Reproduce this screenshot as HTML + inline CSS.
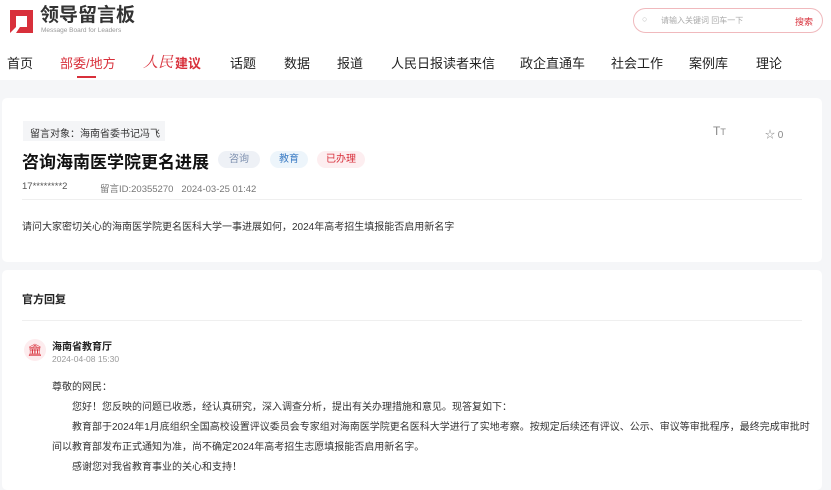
<!DOCTYPE html>
<html><head><meta charset="utf-8"><style>
*{margin:0;padding:0;box-sizing:border-box}
body{width:831px;height:482px;overflow:hidden;background:#f5f6f8;font-family:"Liberation Sans","Noto Sans CJK SC",sans-serif;color:#222;position:relative}
.hd{position:absolute;left:0;top:0;width:831px;height:80px;background:#fff}
.abs{position:absolute;white-space:nowrap}
.nav span{position:absolute;top:53px;font-size:13px;color:#222}
.card{position:absolute;background:#fff;border-radius:5px}
.tag{position:absolute;top:151px;height:17px;border-radius:9px;font-size:10px;line-height:17px;text-align:center}
.p{position:absolute;font-size:10px;color:#333;white-space:nowrap}
</style></head><body>
<div class="hd"></div>
<svg class="abs" style="left:8px;top:8px" width="27" height="27" viewBox="0 0 27 27"><path d="M2 2H25V25H8L12 19H19V8H8V19L2 25Z" fill="#d8303b"/></svg>
<div class="abs" style="left:40px;top:5px;font-size:19px;font-weight:bold;color:#333;line-height:22px">领导留言板</div>
<div class="abs" style="left:41px;top:27px;font-size:6.5px;color:#999">Message Board for Leaders</div>
<div class="abs" style="left:633px;top:8px;width:190px;height:25px;border:1px solid #f0b9bd;border-radius:13px;background:#fff"></div>
<div class="abs" style="left:642px;top:14px;font-size:9px;color:#bbb">○</div>
<div class="abs" style="left:661px;top:15px;font-size:8px;color:#aaa">请输入关键词 回车一下</div>
<div class="abs" style="left:795px;top:15px;font-size:9px;color:#d8303b">搜索</div>
<div class="nav">
<span style="left:7px">首页</span>
<span style="left:60px;color:#d8303b">部委/地方</span>
<span style="left:143px;color:#d8303b;font-style:italic;font-family:'Liberation Serif','Noto Serif CJK SC',serif;font-size:15px;top:51px">人民</span>
<span style="left:175px;color:#d8303b;font-weight:bold">建议</span>
<span style="left:230px">话题</span>
<span style="left:284px">数据</span>
<span style="left:337px">报道</span>
<span style="left:391px">人民日报读者来信</span>
<span style="left:520px">政企直通车</span>
<span style="left:611px">社会工作</span>
<span style="left:689px">案例库</span>
<span style="left:756px">理论</span>
</div>
<div class="abs" style="left:77px;top:76px;width:19px;height:2px;background:#d8303b"></div>

<div class="card" style="left:2px;top:98px;width:820px;height:164px"></div>
<div class="abs" style="left:23px;top:121px;width:142px;height:20px;background:#f4f5f7"></div>
<div class="p" style="left:30px;top:125px;color:#333">留言对象：海南省委书记冯飞</div>
<div class="abs" style="left:22px;top:148px;font-size:17px;font-weight:bold;color:#111">咨询海南医学院更名进展</div>
<div class="tag" style="left:218px;width:42px;background:#eef1f6;color:#7d8fae">咨询</div>
<div class="tag" style="left:270px;width:38px;background:#edf5fb;color:#3c7cc4">教育</div>
<div class="tag" style="left:317px;width:48px;background:#fdeef0;color:#d8303b">已办理</div>
<div class="p" style="left:22px;top:181px;color:#555;font-size:9.5px">17********2</div>
<div class="p" style="left:100px;top:181px;color:#777;font-size:9.5px">留言ID:20355270&nbsp;&nbsp;&nbsp;2024-03-25 01:42</div>
<div class="abs" style="left:713px;top:124px;font-size:12px;color:#888">T<span style="font-size:9px">T</span></div>
<div class="abs" style="left:765px;top:126px;font-size:10px;color:#888">☆ 0</div>
<div class="abs" style="left:22px;top:199px;width:780px;height:1px;background:#efefef"></div>
<div class="p" style="left:22px;top:218px">请问大家密切关心的海南医学院更名医科大学一事进展如何，2024年高考招生填报能否启用新名字</div>

<div class="card" style="left:2px;top:270px;width:820px;height:220px"></div>
<div class="abs" style="left:22px;top:291px;font-size:11px;font-weight:bold;color:#222">官方回复</div>
<div class="abs" style="left:22px;top:320px;width:780px;height:1px;background:#efefef"></div>
<div class="abs" style="left:24px;top:339px;width:22px;height:22px;border-radius:50%;background:#fdecee;color:#d8303b;font-size:12px;text-align:center;line-height:22px">🏛</div>
<div class="abs" style="left:52px;top:338px;font-size:10px;font-weight:bold;color:#222">海南省教育厅</div>
<div class="abs" style="left:52px;top:354px;font-size:8.5px;color:#999">2024-04-08 15:30</div>
<div class="p" style="left:52px;top:378px">尊敬的网民：</div>
<div class="p" style="left:72px;top:398px">您好！您反映的问题已收悉，经认真研究，深入调查分析，提出有关办理措施和意见。现答复如下：</div>
<div class="p" style="left:72px;top:418px">教育部于2024年1月底组织全国高校设置评议委员会专家组对海南医学院更名医科大学进行了实地考察。按规定后续还有评议、公示、审议等审批程序，最终完成审批时</div>
<div class="p" style="left:52px;top:438px">间以教育部发布正式通知为准，尚不确定2024年高考招生志愿填报能否启用新名字。</div>
<div class="p" style="left:72px;top:458px">感谢您对我省教育事业的关心和支持！</div>
</body></html>
